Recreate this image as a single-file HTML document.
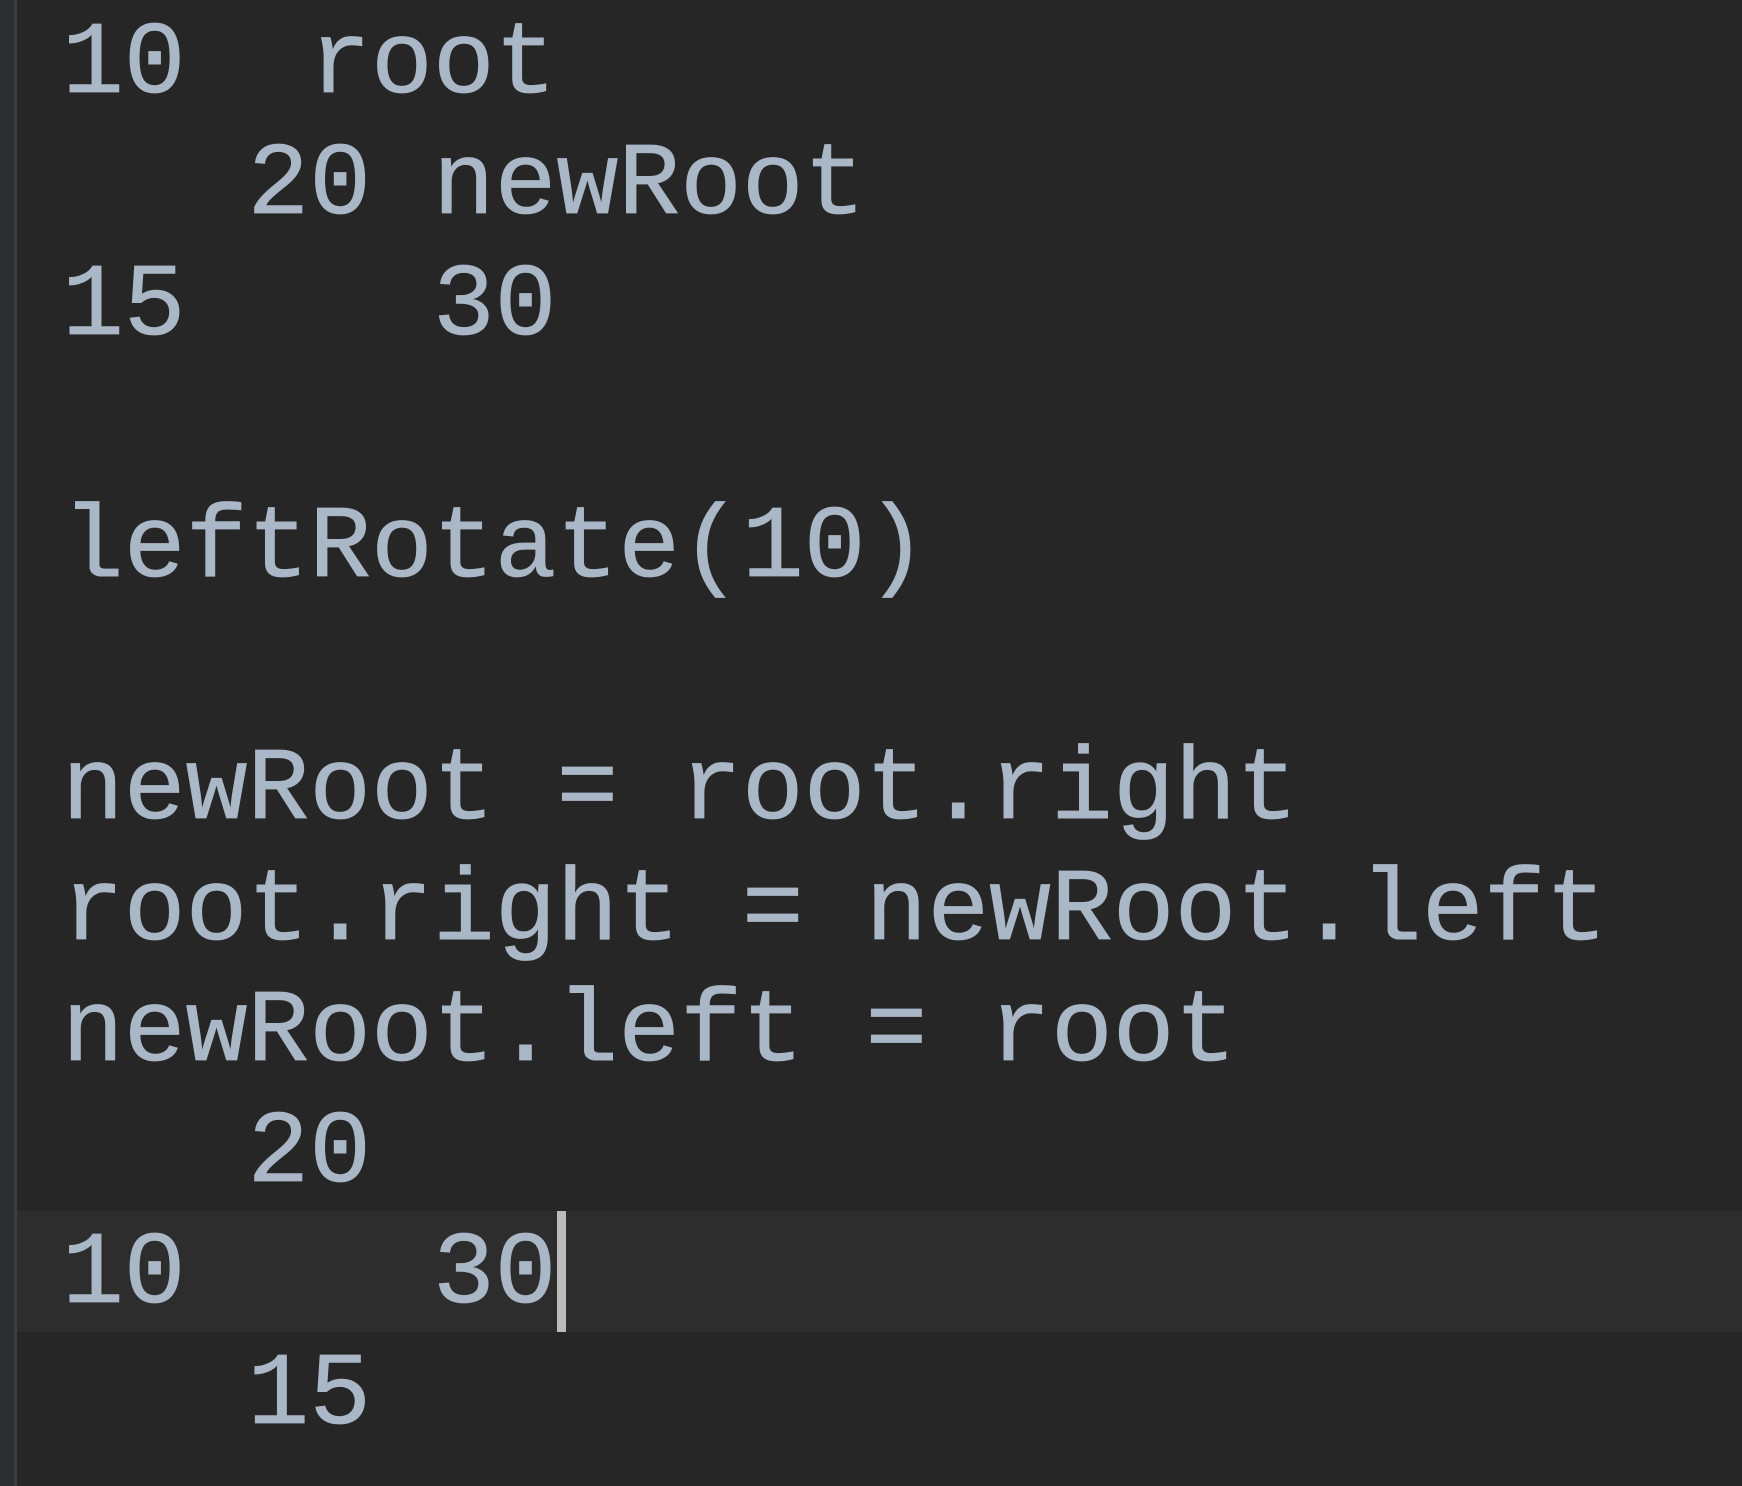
<!DOCTYPE html>
<html><head><meta charset="utf-8"><style>
html,body{margin:0;padding:0;width:1742px;height:1486px;overflow:hidden;background:#262626;}
.strip{position:absolute;left:0;top:0;width:14px;height:1486px;background:#2b2d2e;}
.bar{position:absolute;left:14px;top:0;width:3px;height:1486px;background:#3b3d3e;}
.hl{position:absolute;left:17px;top:1211px;width:1725px;height:121px;background:#2d2d2d;}
.code{position:absolute;left:62px;top:4px;font-family:"Liberation Mono",monospace;font-size:103px;line-height:121px;color:#a9b7c6;white-space:pre;-webkit-text-stroke:0.8px #a9b7c6;}
.cur{position:absolute;left:557px;top:1211px;width:9px;height:121px;background:#bbbbbb;}
</style></head><body>
<div class="strip"></div><div class="bar"></div><div class="hl"></div>
<div class="code">10  root
   20 newRoot
15    30

leftRotate(10)

newRoot = root.right
root.right = newRoot.left
newRoot.left = root
   20
10    30
   15</div>
<div class="cur"></div>
</body></html>
